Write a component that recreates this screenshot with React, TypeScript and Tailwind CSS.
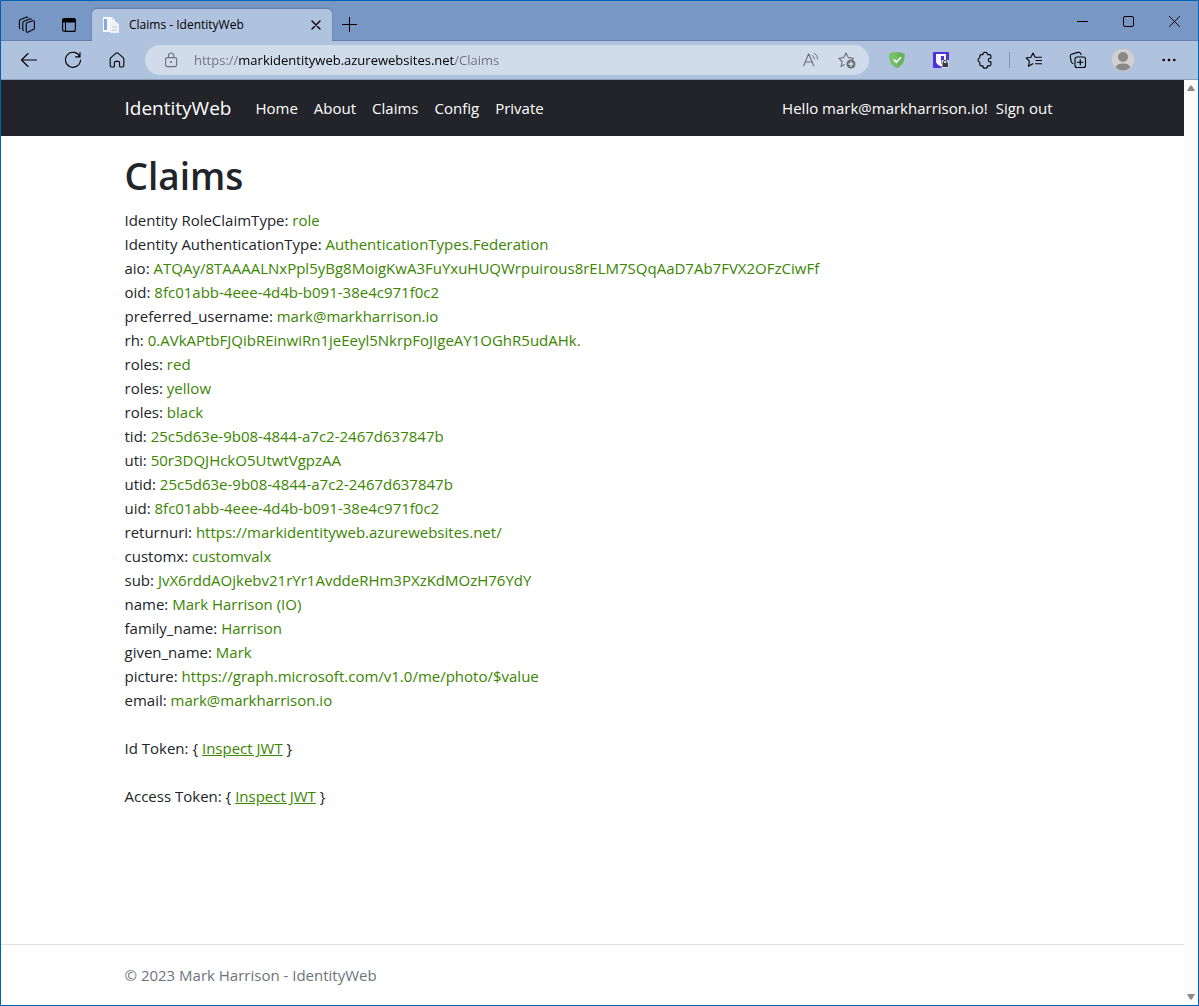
import type { ReactNode } from "react";

const claims: [string, string][] = [
  ["Identity RoleClaimType", "role"],
  ["Identity AuthenticationType", "AuthenticationTypes.Federation"],
  ["aio", "ATQAy/8TAAAALNxPpl5yBg8MoigKwA3FuYxuHUQWrpuirous8rELM7SQqAaD7Ab7FVX2OFzCiwFf"],
  ["oid", "8fc01abb-4eee-4d4b-b091-38e4c971f0c2"],
  ["preferred_username", "mark@markharrison.io"],
  ["rh", "0.AVkAPtbFJQibREinwiRn1jeEeyl5NkrpFoJIgeAY1OGhR5udAHk."],
  ["roles", "red"],
  ["roles", "yellow"],
  ["roles", "black"],
  ["tid", "25c5d63e-9b08-4844-a7c2-2467d637847b"],
  ["uti", "50r3DQJHckO5UtwtVgpzAA"],
  ["utid", "25c5d63e-9b08-4844-a7c2-2467d637847b"],
  ["uid", "8fc01abb-4eee-4d4b-b091-38e4c971f0c2"],
  ["returnuri", "https://markidentityweb.azurewebsites.net/"],
  ["customx", "customvalx"],
  ["sub", "JvX6rddAOjkebv21rYr1AvddeRHm3PXzKdMOzH76YdY"],
  ["name", "Mark Harrison (IO)"],
  ["family_name", "Harrison"],
  ["given_name", "Mark"],
  ["picture", "https://graph.microsoft.com/v1.0/me/photo/$value"],
  ["email", "mark@markharrison.io"],
];

const navItems = ["Home", "About", "Claims", "Config", "Private"];

function Icon({ children, size = 18 }: { children: ReactNode; size?: number }) {
  return (
    <svg
      width={size}
      height={size}
      viewBox={`0 0 ${size} ${size}`}
      fill="none"
      stroke="currentColor"
      strokeWidth="1.1"
      strokeLinecap="round"
      strokeLinejoin="round"
      aria-hidden="true"
      className="shrink-0"
    >
      {children}
    </svg>
  );
}

function BarButton({ label, wide, children }: { label: string; wide?: boolean; children: ReactNode }) {
  return (
    <button
      type="button"
      aria-label={label}
      className={`flex h-full shrink-0 items-center justify-center ${wide ? "w-[46px]" : "w-11"}`}
    >
      {children}
    </button>
  );
}

function TitleBar() {
  return (
    <div className="flex h-10 bg-[#7997c4] pr-px text-black shadow-[inset_0_-1px_0_#6580ab]">
      <div className="flex pt-2 pl-1">
        <button type="button" aria-label="Workspaces" className="flex w-11 items-center justify-center">
          <Icon>
            <path d="M8.2 8.2Q8.2 7 9.3 6.600L14.600 4.800Q16.400 4.300 16.400 6V12Q16.400 13.100 15.400 13.600L10.200 16Q8.200 16.800 8.200 14.900Z" />
            <path d="M5.400 14.500Q4.800 14 4.800 13V7Q4.800 5.700 5.900 5.200L11.500 2.900Q12.600 2.500 13.200 3.100" />
            <path d="M2 12.700Q1.400 12.200 1.400 11.200V5.200Q1.400 3.900 2.500 3.400L8.100 1.300Q9.200.9 9.800 1.500" />
          </Icon>
        </button>
        <button type="button" aria-label="Tab actions" className="flex w-10 items-center justify-center">
          <Icon size={16}>
            <rect x="1.6" y="1.6" width="12.8" height="12.8" rx="2" />
            <path d="M1.6 5V3.6a2 2 0 0 1 2-2h8.8a2 2 0 0 1 2 2V5Z" fill="currentColor" />
            <path d="M4.5 5v9.4" />
          </Icon>
        </button>
      </div>
      <div className="ml-[3px] flex h-8 w-60 items-center self-end rounded-t-[5px] bg-[#b0c3de] pr-2 pl-[11px] shadow-[0_-1px_2px_#5f79a4]">
        <svg width="16" height="16" viewBox="0 0 16 16" aria-hidden="true">
          <path d="M0 0H9L12 3V15H0Z" fill="#f5f8fc" />
          <path d="M1 2H4V13H1Z" fill="#7ea9e3" />
          <path d="M9 0V3H12" fill="#d3dbe7" />
          <path d="M7 5H13L16 8V16H7Z" fill="#edf2f8" />
          <path d="M9 10H14M9 13H14" stroke="#c3ccd9" />
          <path d="M13 5V8H16" fill="#fff" />
        </svg>
        <span className="ml-2.5 grow truncate text-xs leading-4">Claims - IdentityWeb</span>
        <button type="button" aria-label="Close tab" className="flex size-4 items-center justify-center">
          <Icon size={10}>
            <path d="m1 1 8 8M9 1 1 9" strokeWidth="1.4" />
          </Icon>
        </button>
      </div>
      <button type="button" aria-label="New tab" className="flex w-[34px] items-center justify-center pt-1.5">
        <Icon size={15}>
          <path d="M7.5.5v14M.5 7.5h14" />
        </Icon>
      </button>
      <div className="ml-auto flex">
        <BarButton label="Minimize" wide>
          <Icon size={11}>
            <path d="M.5 5.5h10" strokeWidth="1" />
          </Icon>
        </BarButton>
        <BarButton label="Maximize" wide>
          <Icon size={11}>
            <rect x=".5" y=".5" width="10" height="10" rx="1.5" strokeWidth="1" />
          </Icon>
        </BarButton>
        <BarButton label="Close" wide>
          <Icon size={11}>
            <path d="m.5.5 10 10m0-10-10 10" strokeWidth="1" />
          </Icon>
        </BarButton>
      </div>
    </div>
  );
}

function AddressBar() {
  return (
    <div className="mx-1.5 flex h-[30px] min-w-0 grow items-center rounded-full bg-[#d1dceb] pr-[13px] pl-[18px] text-[#6c7078]">
      <Icon size={16}>
        <rect x="2.6" y="5.6" width="11" height="9" rx="1.5" />
        <path d="M5.5 5.5V3.6a2.6 2.6 0 0 1 5.2 0v1.9" />
        <circle cx="8.1" cy="10" r=".5" fill="currentColor" />
      </Icon>
      <input
        type="text"
        aria-label="Address"
        defaultValue="https://markidentityweb.azurewebsites.net/Claims"
        className="ml-[15px] min-w-0 grow bg-[linear-gradient(to_right,#6c7078_45px,#000_45px,#000_261px,#6c7078_261px)] bg-clip-text text-[13px] leading-5 text-transparent caret-black outline-none"
      />
      <button type="button" aria-label="Read aloud" className="mr-[18px] shrink-0">
        <Icon>
          <path d="m1.6 15 4.9-12h.4l4.9 12M3.3 11h6.8" />
          <path d="M10.5 4.3a5 5 0 0 1 1.9 3.6M12.5 2.2A8 8 0 0 1 15.8 8" strokeWidth="1" />
        </Icon>
      </button>
      <button type="button" aria-label="Add to favorites" className="shrink-0">
        <Icon>
          <path d="m6.5 13.5-3.4 2.1.9-5.1L.9 7.3l4.8-.7L8 2l2.3 4.6 5.2.6-1.4 1.4" />
          <circle cx="13" cy="13" r="4.5" fill="currentColor" stroke="none" />
          <path d="M13 10.7v4.6M10.7 13h4.6" stroke="#fff" />
        </Icon>
      </button>
    </div>
  );
}

function ToolBar() {
  return (
    <div className="flex h-[39px] items-center border-b border-[#8c9db9] bg-[#b0c3de] pr-1.5 pl-1.5 text-black">
      <BarButton label="Back">
        <Icon>
          <path d="M16.5 9H1.5M8 2.5 1.5 9 8 15.5" />
        </Icon>
      </BarButton>
      <BarButton label="Refresh">
        <Icon>
          <path d="M15.8 5.6A7.5 7.5 0 1 0 16.5 9M16 1.5v4.4h-4.4" />
        </Icon>
      </BarButton>
      <BarButton label="Home">
        <Icon>
          <path d="M2.2 8.1Q2.2 7.2 2.9 6.6L8 2.2q1-.8 2 0l5.1 4.4q.7.6.7 1.5v6.5q0 1.4-1.4 1.4h-1.8q-1 0-1-1v-3.2q0-1.4-1.4-1.4H7.8q-1.4 0-1.4 1.4V15q0 1-1 1H3.6q-1.4 0-1.4-1.4Z" />
        </Icon>
      </BarButton>
      <AddressBar />
      <BarButton label="Ad blocker">
        <svg width="16" height="16" viewBox="0 0 16 16" fill="none" aria-hidden="true">
          <path d="M8 0c2.5.2 5.3.7 7.7 1.7C15.7 8 14.9 12.5 8 16 1.1 12.5.3 8 .3 1.7 2.7.7 5.5.2 8 0Z" fill="#67b35b" />
          <path d="M8 0v16C1.1 12.5.3 8 .3 1.7 2.7.7 5.5.2 8 0Z" fill="#78c169" />
          <path d="m4.7 7.5 2.7 2.7 4.5-5" stroke="#fff" strokeWidth="1.7" />
        </svg>
      </BarButton>
      <BarButton label="Password manager">
        <svg width="16" height="16" viewBox="0 0 16 16" fill="none" aria-hidden="true">
          <rect width="16" height="16" rx="1" fill="#4f2fe0" />
          <path d="M3 2h10v7c0 2.5-2 4-5 5.500C5 13 3 11.500 3 9Z" fill="#fff" />
          <path d="M8 4h3v5c0 1-1 2-3 3Z" fill="#4f2fe0" />
          <rect x="8.5" y="8" width="7.5" height="8" rx="1" fill="#d5dce8" />
          <path d="M10.5 11.5V10a1.7 1.7 0 0 1 3.4 0v1.5" stroke="#3a3d43" />
          <rect x="9.5" y="11" width="5.5" height="4" fill="#3a3d43" />
        </svg>
      </BarButton>
      <BarButton label="Extensions">
        <Icon>
          <path d="M5.3 3.6h1.600a2.300 2.300 0 0 1 4.600 0h1.900q1.500 0 1.500 1.500v2.100h-.8a1.800 1.800 0 0 0 0 3.700h.8v2.500q0 1.500-1.500 1.500h-1.900a2.300 2.300 0 0 1-4.600 0H5.300q-1.500 0-1.500-1.500v-2.100a2.300 2.300 0 0 1 0-4.500V5.100q0-1.500 1.500-1.500Z" />
        </Icon>
      </BarButton>
      <span className="mx-0.5 h-4 w-px shrink-0 bg-[#8093b2]" />
      <BarButton label="Favorites">
        <Icon>
          <path d="m7.8 12.7-4.3 2.6.9-5.1L1.2 7l4.700-.7L8 2l2.100 4.300H16.500M11 9.500h5.500M10.500 12.700h6" />
        </Icon>
      </BarButton>
      <BarButton label="Collections">
        <Icon>
          <rect x="6" y="6" width="10.5" height="10.5" rx="2" />
          <path d="M11.25 8.5v5.5M8.5 11.25h5.5M4 12.5Q2.5 12 2.2 10.5L1.3 5.6Q1 3.8 2.6 3.3L8.7 1.4Q10.5.9 11.5 2.4L12 3.5" />
        </Icon>
      </BarButton>
      <BarButton label="Profile" wide>
        <svg width="22" height="22" viewBox="0 0 22 22" aria-hidden="true">
          <circle cx="11" cy="11" r="11" fill="#d2d0ce" />
          <circle cx="11" cy="8" r="5" fill="#8a8886" />
          <path d="M3.5 18.5C5 15.3 7.5 14.5 11 14.5s6 .8 7.5 4A11 11 0 0 1 3.5 18.5Z" fill="#8a8886" />
        </svg>
      </BarButton>
      <BarButton label="Settings and more" wide>
        <svg width="14" height="4" viewBox="0 0 14 4" aria-hidden="true">
          <circle cx="1.7" cy="2" r="1.3" />
          <circle cx="7" cy="2" r="1.3" />
          <circle cx="12.3" cy="2" r="1.3" />
        </svg>
      </BarButton>
    </div>
  );
}

function ScrollBar() {
  return (
    <div className="flex w-3.5 shrink-0 flex-col items-center justify-between bg-[#fcfcfc] py-[5px]" aria-hidden="true">
      <svg width="8" height="6" viewBox="0 0 8 6">
        <path d="M3.2.5h1.6L8 6H0Z" fill="#8b8b8b" />
      </svg>
      <svg width="8" height="6" viewBox="0 0 8 6">
        <path d="M0 0h8L4.8 5.5H3.2Z" fill="#8b8b8b" />
      </svg>
    </div>
  );
}

function TokenLine({ label }: { label: string }) {
  return (
    <p className="mt-6">
      {label}: {"{ "}
      <a href="#inspect" className="text-[#3b8500] underline">
        Inspect JWT
      </a>
      {" }"}
    </p>
  );
}

export default function App() {
  return (
    <div className="flex min-h-screen flex-col border border-[#0063b1] bg-white font-['Open_Sans','Noto_Sans',sans-serif] text-[15px] leading-6 text-[#212529]">
      <TitleBar />
      <ToolBar />
      <div className="flex grow">
        <div className="flex min-w-0 grow flex-col">
          <header className="bg-[#232429] text-white">
            <div className="mx-auto flex h-14 w-full max-w-[960px] items-center px-3">
              <a href="#top" className="mr-4 text-[19px] leading-8">
                IdentityWeb
              </a>
              <nav className="flex grow">
                {navItems.map((item) => (
                  <a key={item} href={`#${item.toLowerCase()}`} className="px-2 py-2">
                    {item}
                  </a>
                ))}
              </nav>
              <span>Hello mark@markharrison.io!</span>
              <a href="#signout" className="px-2 py-2">
                Sign out
              </a>
            </div>
          </header>
          <main className="mx-auto w-full max-w-[960px] grow px-3 pt-4">
            <h1 className="mb-2 text-[37px] leading-[48px] font-semibold">Claims</h1>
            <ul>
              {claims.map(([key, value], i) => (
                <li key={i} className="break-words">
                  {key}: <span className="text-[#3b8500]">{value}</span>
                </li>
              ))}
            </ul>
            <TokenLine label="Id Token" />
            <TokenLine label="Access Token" />
          </main>
          <footer className="border-t border-[#dee2e6] text-[#6c757d]">
            <div className="mx-auto flex h-[60px] w-full max-w-[960px] items-center px-3">
              © 2023 Mark Harrison - IdentityWeb
            </div>
          </footer>
        </div>
        <ScrollBar />
      </div>
    </div>
  );
}
